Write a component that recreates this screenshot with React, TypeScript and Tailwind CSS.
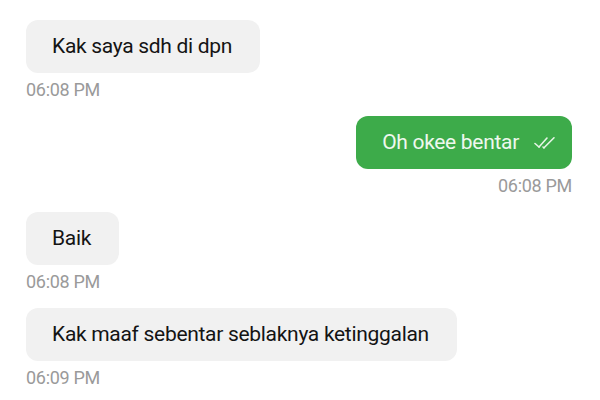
const MESSAGES = [
  { id: 1, text: "Kak saya sdh di dpn", time: "06:08 PM", mine: false },
  { id: 2, text: "Oh okee bentar", time: "06:08 PM", mine: true },
  { id: 3, text: "Baik", time: "06:08 PM", mine: false },
  { id: 4, text: "Kak maaf sebentar seblaknya ketinggalan", time: "06:09 PM", mine: false },
] as const;

function DoubleCheck() {
  return (
    <svg width="22" height="14" viewBox="0 0 22 14" fill="none" className="ml-[15px]">
      <path d="M1 7.5l4 3.5" stroke="#e6f4e6" strokeWidth="1.6" strokeLinecap="round" />
      <path d="M5 11l8-9" stroke="#e6f4e6" strokeWidth="1.6" strokeLinecap="round" />
      <path d="M9 11l1 0.8" stroke="#e6f4e6" strokeWidth="1.6" strokeLinecap="round" />
      <path d="M10 11.8l10-10" stroke="#e6f4e6" strokeWidth="1.6" strokeLinecap="round" />
    </svg>
  );
}

export default function App() {
  return (
    <div className="h-[400px] w-[600px] overflow-hidden bg-white font-['Roboto',sans-serif]">
      <div className="-mt-[17px] px-[26px] text-[18px] leading-[20px] tracking-[-0.3px] text-[#9a9a9a]">
        06:08 PM
      </div>
      <ul className="mt-[17px] flex flex-col gap-[16px] px-[26px]">
        {MESSAGES.map((m) => (
          <li key={m.id} className={`flex flex-col ${m.mine ? "items-end pr-[2px]" : "items-start"}`}>
            <div
              className={`flex h-[53px] items-center rounded-[12px] pl-[26px] text-[21px] tracking-[-0.3px] ${
                m.mine ? "bg-[#3dab4a] pr-[16px] text-[#eef8ee]" : "bg-[#f1f1f1] pr-[28px] text-[#141414]"
              }`}
            >
              <span>{m.text}</span>
              {m.mine && <DoubleCheck />}
            </div>
            <span className="mt-[7px] text-[18px] leading-[20px] tracking-[-0.3px] text-[#9a9a9a]">
              {m.time}
            </span>
          </li>
        ))}
      </ul>
    </div>
  );
}
